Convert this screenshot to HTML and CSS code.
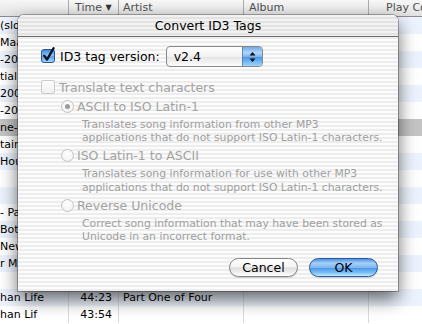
FILE: index.html
```html
<!DOCTYPE html>
<html lang="en">
<head>
  <meta charset="UTF-8" />
  <title>Convert ID3 Tags</title>
  <link rel="stylesheet" href="styles.css">
</head>
<body>

  <div class="screen">
    <!-- song list behind the sheet -->
    <div class="list">
      <div class="list-head">
        <div class="col name"></div>
        <div class="col time">Time <span class="sort">▼</span></div>
        <div class="col artist">Artist</div>
        <div class="col album">Album</div>
        <div class="col plays">Play Count</div>
      </div>
      <div class="rows">
        <div class="row"><div class="col name">(slow</div><div class="col time"></div><div class="col artist"></div><div class="col album"></div><div class="col plays"></div></div>
        <div class="row"><div class="col name">Maan</div><div class="col time"></div><div class="col artist"></div><div class="col album"></div><div class="col plays"></div></div>
        <div class="row"><div class="col name">-2002</div><div class="col time"></div><div class="col artist"></div><div class="col album"></div><div class="col plays"></div></div>
        <div class="row"><div class="col name">tial</div><div class="col time"></div><div class="col artist"></div><div class="col album"></div><div class="col plays"></div></div>
        <div class="row"><div class="col name">2003</div><div class="col time"></div><div class="col artist"></div><div class="col album"></div><div class="col plays"></div></div>
        <div class="row"><div class="col name">-2004</div><div class="col time"></div><div class="col artist"></div><div class="col album"></div><div class="col plays"></div></div>
        <div class="row selected"><div class="col name">ne-One</div><div class="col time"></div><div class="col artist"></div><div class="col album"></div><div class="col plays"></div></div>
        <div class="row"><div class="col name">tain</div><div class="col time"></div><div class="col artist"></div><div class="col album"></div><div class="col plays"></div></div>
        <div class="row"><div class="col name">Hour</div><div class="col time"></div><div class="col artist"></div><div class="col album"></div><div class="col plays"></div></div>
        <div class="row"><div class="col name"></div><div class="col time"></div><div class="col artist"></div><div class="col album"></div><div class="col plays"></div></div>
        <div class="row"><div class="col name"></div><div class="col time"></div><div class="col artist"></div><div class="col album"></div><div class="col plays"></div></div>
        <div class="row"><div class="col name">- Part</div><div class="col time"></div><div class="col artist"></div><div class="col album"></div><div class="col plays"></div></div>
        <div class="row"><div class="col name">Bottom</div><div class="col time"></div><div class="col artist"></div><div class="col album"></div><div class="col plays"></div></div>
        <div class="row"><div class="col name">New</div><div class="col time"></div><div class="col artist"></div><div class="col album"></div><div class="col plays"></div></div>
        <div class="row"><div class="col name">r Man</div><div class="col time"></div><div class="col artist"></div><div class="col album"></div><div class="col plays"></div></div>
        <div class="row"><div class="col name"></div><div class="col time"></div><div class="col artist"></div><div class="col album"></div><div class="col plays"></div></div>
        <div class="row"><div class="col name">han Life</div><div class="col time">44:23</div><div class="col artist">Part One of Four</div><div class="col album"></div><div class="col plays"></div></div>
        <div class="row"><div class="col name">han Lif</div><div class="col time">43:54</div><div class="col artist"></div><div class="col album"></div><div class="col plays"></div></div>
      </div>
    </div>

    <!-- Convert ID3 Tags sheet -->
    <div class="dialog">
      <div class="dialog-title">Convert ID3 Tags</div>
      <div class="dialog-body">

        <div class="version-row">
          <svg class="checkbox" width="15" height="16" viewBox="0 0 15 16">
            <defs>
              <linearGradient id="cbFill" x1="0" y1="0" x2="0" y2="1">
                <stop offset="0" stop-color="#3d86dc"/>
                <stop offset="0.45" stop-color="#8fc0f3"/>
                <stop offset="0.55" stop-color="#5aa0ea"/>
                <stop offset="1" stop-color="#a9dcfd"/>
              </linearGradient>
            </defs>
            <rect x="0.5" y="2.5" width="13" height="13" rx="2.5" fill="url(#cbFill)" stroke="#2b5796"/>
            <path d="M3.2 8.6 L6 12.6 L12.6 1.2" fill="none" stroke="#0d1424" stroke-width="2.3" stroke-linecap="round" stroke-linejoin="round"/>
          </svg>
          <span class="label">ID3 tag version:</span>
          <div class="popup">
            <span class="popup-value">v2.4</span>
            <span class="popup-arrows">
              <svg width="7" height="12" viewBox="0 0 7 12">
                <path d="M3.5 1 L6.5 4.5 L0.5 4.5 Z" fill="#111"/>
                <path d="M3.5 11 L6.5 7.5 L0.5 7.5 Z" fill="#111"/>
              </svg>
            </span>
          </div>
        </div>

        <div class="translate-row">
          <span class="checkbox-off"></span>
          <span class="label disabled">Translate text characters</span>
        </div>

        <div class="options">
          <div class="option">
            <div class="option-label"><span class="radio on"></span><span class="label disabled">ASCII to ISO Latin-1</span></div>
            <p class="option-desc">Translates song information from other MP3<br>applications that do not support ISO Latin-1 characters.</p>
          </div>
          <div class="option">
            <div class="option-label"><span class="radio"></span><span class="label disabled">ISO Latin-1 to ASCII</span></div>
            <p class="option-desc">Translates song information for use with other MP3<br>applications that do not support ISO Latin-1 characters.</p>
          </div>
          <div class="option">
            <div class="option-label"><span class="radio"></span><span class="label disabled">Reverse Unicode</span></div>
            <p class="option-desc">Correct song information that may have been stored as<br>Unicode in an incorrect format.</p>
          </div>
        </div>

        <div class="buttons">
          <button class="btn">Cancel</button>
          <button class="btn default">OK</button>
        </div>

      </div>
    </div>
  </div>

</body>
</html>
```

FILE: styles.css
```css
* {
  margin: 0;
  padding: 0;
  box-sizing: border-box;
}

body {
  font-family: "DejaVu Sans", "Liberation Sans", sans-serif;
  background: #fff;
  width: 422px;
  height: 324px;
  overflow: hidden;
}

.screen {
  position: relative;
  width: 422px;
  height: 324px;
  overflow: hidden;
}

/* ---- song list ---- */

.list-head,
.row {
  display: flex;
}

.list-head {
  height: 17px;
  border-bottom: 1px solid #8d8d8d;
  background: linear-gradient(#f7f7f7, #e1e1e1);
  font-size: 11px;
  line-height: 16px;
  color: #505050;
}

.col {
  white-space: nowrap;
  overflow: hidden;
  border-right: 1px solid #dadada;
}

.list-head .col {
  border-right-color: #ababab;
}

.name { width: 69px; }
.time { width: 50px; text-align: right; padding-right: 6px; }
.artist { width: 125px; padding-left: 4px; }
.album { width: 125px; padding-left: 5px; }
.plays { flex: 1; padding-left: 17px; border-right: none; }

.list-head .time {
  text-align: left;
  padding-left: 6px;
}

.sort {
  font-size: 8px;
  color: #333;
  vertical-align: 1px;
}

.row {
  height: 17px;
  line-height: 17px;
  font-size: 11px;
  color: #000;
}

.row:nth-child(odd) {
  background: #edf3fe;
}

.row.selected {
  background: #c4c4c4;
}

/* ---- sheet ---- */

.dialog {
  position: absolute;
  left: 18px;
  top: 15px;
  width: 380px;
  height: 276px;
  border-radius: 6px 6px 0 0;
  background: repeating-linear-gradient(#fcfcfc 0 2px, #ededed 2px 4px);
  box-shadow: 0 0 0 1px rgba(0, 0, 0, 0.28), 0 8px 18px rgba(0, 0, 0, 0.6);
}

.dialog-title {
  height: 22px;
  border-bottom: 1px solid #6c6c6c;
  border-radius: 6px 6px 0 0;
  background: repeating-linear-gradient(#f2f2f2 0 2px, #e2e2e2 2px 4px);
  text-align: center;
  font-size: 12.5px;
  line-height: 22px;
  color: #000;
}

.dialog-body {
  padding: 9px 20px 0 23px;
}

.label {
  font-size: 12.5px;
  color: #000;
}

.label.disabled {
  color: #a3a3a3;
}

.version-row {
  display: flex;
  align-items: center;
  height: 21px;
}

.checkbox {
  display: block;
  margin-top: -3px;
  margin-right: 4px;
}

.popup {
  display: flex;
  margin-left: 6px;
  width: 97px;
  height: 21px;
  border: 1px solid #8a8a8a;
  border-radius: 4px;
  background: linear-gradient(#ffffff, #f1f1f1 50%, #e6e6e6 55%, #fdfdfd);
  overflow: hidden;
}

.popup-value {
  flex: 1;
  padding-left: 7px;
  font-size: 12.5px;
  line-height: 19px;
}

.popup-arrows {
  width: 20px;
  display: flex;
  align-items: center;
  justify-content: center;
  border-left: 1px solid #5a86c0;
  background: linear-gradient(#6fa8ea, #b3d6f8 30%, #78b2f0 52%, #4e98ea 55%, #9ad6fd);
}

.popup-arrows svg {
  display: block;
}

.translate-row {
  display: flex;
  align-items: center;
  height: 16px;
  margin-top: 12px;
}

.checkbox-off {
  width: 14px;
  height: 14px;
  margin-right: 4px;
  border: 1px solid #cbcbcb;
  border-radius: 2px;
  background: linear-gradient(#fdfdfd, #f0f0f0);
}

.options {
  margin-top: 3px;
  margin-left: 20px;
}

.option + .option {
  margin-top: 2.75px;
}

.option-label {
  display: flex;
  align-items: center;
  height: 16px;
}

.radio {
  position: relative;
  width: 13px;
  height: 13px;
  margin-right: 3px;
  border: 1px solid #c3c3c3;
  border-radius: 50%;
  background: radial-gradient(circle at 50% 35%, #ffffff, #eeeeee);
}

.radio.on::after {
  content: "";
  position: absolute;
  left: 3px;
  top: 3px;
  width: 5px;
  height: 5px;
  border-radius: 50%;
  background: #9b9b9b;
}

.option-desc {
  margin-top: 3.75px;
  margin-left: 21px;
  font-size: 10.8px;
  line-height: 13.5px;
  color: #a0a0a0;
  white-space: nowrap;
}

.buttons {
  display: flex;
  justify-content: flex-end;
  gap: 11px;
  margin-top: 14px;
}

.btn {
  width: 69px;
  height: 19px;
  border: 1px solid #858585;
  border-radius: 10px;
  font-family: "DejaVu Sans", "Liberation Sans", sans-serif;
  font-size: 12.5px;
  line-height: 17px;
  color: #000;
  background: linear-gradient(#ffffff, #f4f4f4 45%, #dedede 52%, #f0f0f0 80%, #ffffff);
  box-shadow: 0 1px 1px rgba(0, 0, 0, 0.15);
}

.btn.default {
  border-color: #2c5a9a;
  background: linear-gradient(#4f92e2, #a8d0f7 25%, #7db6f0 50%, #4b97ea 54%, #7fc2f8 82%, #c2edff);
}
```
